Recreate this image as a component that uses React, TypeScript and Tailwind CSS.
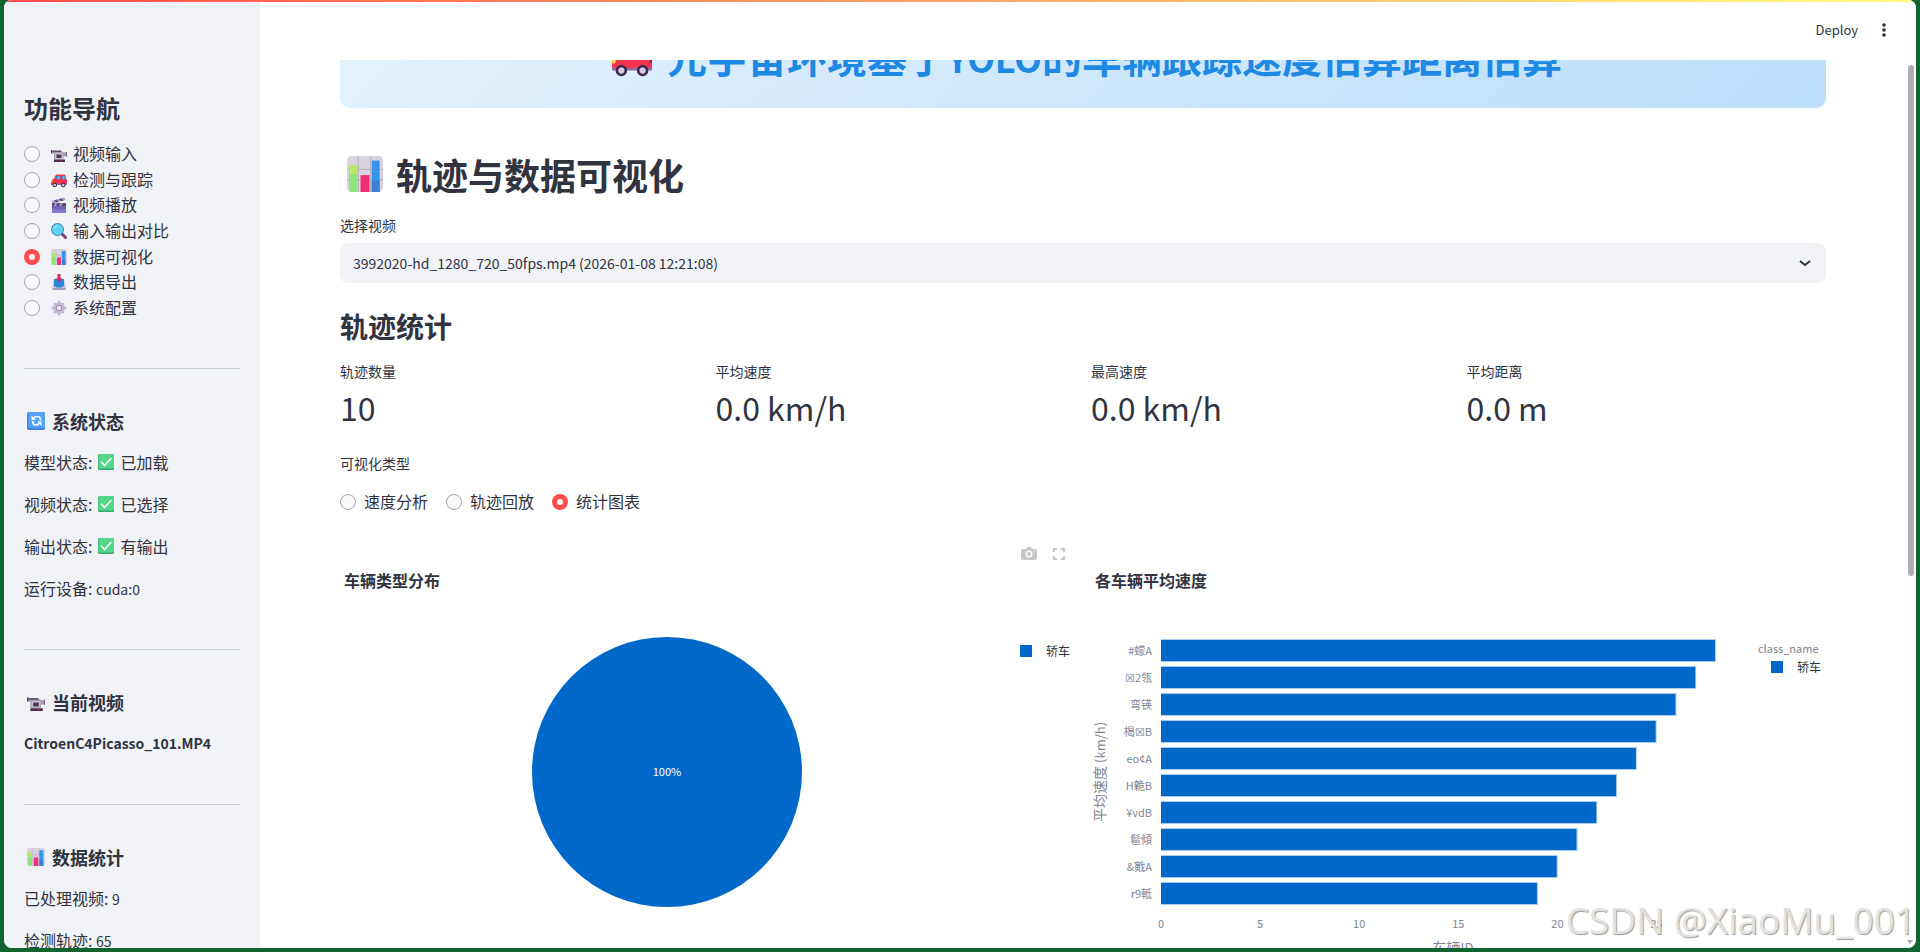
import { useState } from "react"
import type { ReactNode } from "react"

const font = "font-['Noto_Sans_CJK_SC','Noto_Sans',sans-serif]"

function ChartEmoji({ className }: { className: string }) {
    return (
        <svg viewBox="0 0 32 32" className={className} aria-hidden="true">
            <rect width="32" height="32" rx="4" fill="#d8d3e0" />
            <path d="M0 12h32M0 21h32M10 0v32M21 0v32" stroke="#b9b0c8" strokeWidth="1" />
            <path d="M2 8h7v24H4q-2 0-2-2z" fill="#8fe27c" />
            <path d="M2 8h7v8H2z" fill="#b8e866" />
            <rect x="12" y="17" width="8" height="15" fill="#ef2f73" />
            <path d="M22 4h7v28h-7z" fill="#3795e8" />
            <path d="M22 22h7v10h-7z" fill="#3f7fd6" />
        </svg>
    )
}

function CarEmoji({ className }: { className: string }) {
    return (
        <svg viewBox="0 0 32 32" className={className} aria-hidden="true">
            <path d="M9 7q1-2 3-2h14q2 0 3 2l2 8H5z" fill="#e8304c" />
            <path d="M11 8h7v8H7zM20 8h7l2 8h-9z" fill="#3fc1ea" />
            <path d="M11 8h3l-3 8H7zM20 8h3v8h-3z" fill="#2a86c8" />
            <path d="M2 16q1-2 4-2h23q3 1 3 4v6q0 1-1 1H1q-1 0-1-2v-4z" fill="#f4354f" />
            <path d="M0 24h32v1q0 1-1 1H1q-1 0-1-1z" fill="#8b6d9c" />
            <ellipse cx="1.500" cy="18" rx="1.500" ry="2.500" fill="#ffe03a" />
            <path d="M30 17h2v3h-2z" fill="#a3145a" />
            <circle cx="7.500" cy="26" r="4.600" fill="#3e2b4f" />
            <circle cx="24.500" cy="26" r="4.600" fill="#3e2b4f" />
            <circle cx="7.500" cy="26" r="2.500" fill="#d9cbe8" />
            <circle cx="24.500" cy="26" r="2.500" fill="#d9cbe8" />
        </svg>
    )
}

function CameraEmoji({ className }: { className: string }) {
    return (
        <svg viewBox="0 0 32 32" className={className} aria-hidden="true">
            <path d="M0 8h3v7H0z" fill="#4a3a56" />
            <path d="M3 10h16q5 0 6 3l7-1v8l-7 1v6H6V15H3z" fill="#a79db3" />
            <path d="M3 9h17v3H3z" fill="#5c4b69" />
            <path d="M30 12h2v9h-2z" fill="#7c6c8b" />
            <rect x="8" y="14" width="16" height="12" rx="1" fill="#c8c1d1" />
            <rect x="11" y="17" width="10" height="7" fill="#4b3a5d" />
            <path d="M6 27h22v4q0 1-1 1H7q-1 0-1-1z" fill="#4a2f4d" />
            <rect x="19" y="28" width="3" height="2" fill="#c22f55" />
        </svg>
    )
}

function ClapperEmoji({ className }: { className: string }) {
    return (
        <svg viewBox="0 0 32 32" className={className} aria-hidden="true">
            <path d="M1 8 26 1l3 5L3 13z" fill="#a597c6" />
            <path d="m6 7 5 4 4-1-4-5zM16 4l5 4 4-1-5-4z" fill="#5c4875" />
            <path d="M2 12h28v20H2z" fill="#7465b4" />
            <path d="M2 12h28v6H2z" fill="#57467a" />
            <path d="m8 12-3 6h5l3-6zM19 12l-3 6h5l3-6z" fill="#a597c6" />
            <path d="M2 25h28v7H2z" fill="#8579d0" />
        </svg>
    )
}

function SearchEmoji({ className }: { className: string }) {
    return (
        <svg viewBox="0 0 32 32" className={className} aria-hidden="true">
            <path d="m20 20 9 9" stroke="#7a3f7d" strokeWidth="6" strokeLinecap="round" />
            <circle cx="13" cy="13" r="13" fill="#3d86bd" />
            <circle cx="13" cy="13" r="11" fill="#5fd2ee" />
            <path d="M6 11q2-5 7-5" stroke="#b5f0fb" strokeWidth="2" fill="none" />
        </svg>
    )
}

function ExportEmoji({ className }: { className: string }) {
    return (
        <svg viewBox="0 0 32 32" className={className} aria-hidden="true">
            <path d="M6 9h20l3 16v5q0 2-2 2H5q-2 0-2-2v-5z" fill="#cfc4dc" />
            <path d="M6 10h20v14l-5 3H11l-5-3z" fill="#2e86d8" />
            <path d="M3 28h26v2q0 2-2 2H5q-2 0-2-2z" fill="#a99bbd" />
            <path d="M13 0h6v9h4l-7 7-7-7h4z" fill="#d8295c" />
        </svg>
    )
}

function GearEmoji({ className }: { className: string }) {
    return (
        <svg viewBox="0 0 32 32" className={className} aria-hidden="true">
            <g stroke="#c3b7d5" strokeWidth="6" strokeLinecap="round">
                <path d="M16 4v24M4 16h24M8 8l16 16M24 8 8 24" />
            </g>
            <circle cx="16" cy="16" r="11" fill="#c8bbd9" />
            <circle cx="16" cy="16" r="6.500" fill="#9d8fae" />
            <circle cx="16" cy="16" r="4.500" fill="#e9e6ef" />
        </svg>
    )
}

function RefreshEmoji({ className }: { className: string }) {
    return (
        <svg viewBox="0 0 32 32" className={className} aria-hidden="true">
            <rect width="32" height="32" rx="3" fill="#3f7fe0" />
            <rect x="2" width="30" height="29" rx="3" fill="#52a0f7" />
            <g fill="none" stroke="#fff" strokeWidth="3">
                <path d="M11 12q2-4 7-4 6 0 6 7" />
                <path d="M23 19q-2 4-7 4-6 0-6-7" />
            </g>
            <path d="M8 6v8h8zM26 25v-8h-8z" fill="#fff" />
        </svg>
    )
}

function CheckEmoji({ className }: { className: string }) {
    return (
        <svg viewBox="0 0 32 32" className={className} aria-hidden="true">
            <rect width="32" height="32" rx="3" fill="#35a869" />
            <rect x="1" width="31" height="29" rx="3" fill="#56d68b" />
            <path d="m7 16 6 7L26 9" fill="none" stroke="#fff" strokeWidth="3" strokeLinecap="round" />
        </svg>
    )
}

const navItems = [
    { label: "视频输入", Icon: CameraEmoji },
    { label: "检测与跟踪", Icon: CarEmoji },
    { label: "视频播放", Icon: ClapperEmoji },
    { label: "输入输出对比", Icon: SearchEmoji },
    { label: "数据可视化", Icon: ChartEmoji },
    { label: "数据导出", Icon: ExportEmoji },
    { label: "系统配置", Icon: GearEmoji },
]

const statusItems = [
    { label: "模型状态:", value: "已加载" },
    { label: "视频状态:", value: "已选择" },
    { label: "输出状态:", value: "有输出" },
]

const metrics = [
    { label: "轨迹数量", value: "10" },
    { label: "平均速度", value: "0.0 km/h" },
    { label: "最高速度", value: "0.0 km/h" },
    { label: "平均距离", value: "0.0 m" },
]

const chartTypes = ["速度分析", "轨迹回放", "统计图表"]

const bars = [
    { id: "#蠓A", value: 28 },
    { id: "☒2瓴", value: 27 },
    { id: "弯锳", value: 26 },
    { id: "楬☒B", value: 25 },
    { id: "eo¢A", value: 24 },
    { id: "H臲B", value: 23 },
    { id: "¥vdB", value: 22 },
    { id: "髱傾", value: 21 },
    { id: "&戭A", value: 20 },
    { id: "r9軧", value: 19 },
]

const ticks = [0, 5, 10, 15, 20, 25]

const radioClass =
    "size-4 shrink-0 appearance-none rounded-full border border-[#a3a5ad] bg-[#fafafc] checked:border-5 checked:border-[#ff4b4b]"

function SideHeading({ icon, children }: { icon: ReactNode; children: ReactNode }) {
    return (
        <h3 className="flex items-center gap-[7px] pl-[3px] text-lg leading-6 font-bold">
            {icon}
            {children}
        </h3>
    )
}

function Sidebar() {
    const [page, setPage] = useState("数据可视化")

    return (
        <aside className="w-64 shrink-0 overflow-hidden bg-[#f0f2f6] px-5 pt-[93px]">
            <h2 className="text-2xl leading-[30px] font-bold">功能导航</h2>
            <div className="mt-[19px] flex h-[178px] flex-col justify-between">
                {navItems.map(({ label, Icon }) => (
                    <label key={label} className="flex h-6 items-center">
                        <input
                            type="radio"
                            name="page"
                            className={radioClass}
                            checked={page === label}
                            onChange={() => setPage(label)}
                        />
                        <Icon className="mr-[6px] ml-[11px] size-4" />
                        <span className="pb-0.5">{label}</span>
                    </label>
                ))}
            </div>
            <hr className="mt-12 mb-10 border-[#cacdd2]" />
            <SideHeading icon={<RefreshEmoji className="size-[18px]" />}>系统状态</SideHeading>
            <div className="mt-4 flex flex-col gap-4 leading-[26px]">
                {statusItems.map((item) => (
                    <p key={item.label} className="flex items-center">
                        {item.label}
                        <CheckEmoji className="mr-[6px] ml-[6px] size-4" />
                        {item.value}
                    </p>
                ))}
                <p>运行设备: <span className="text-sm">cuda:0</span></p>
            </div>
            <hr className="mt-12 mb-10 border-[#cacdd2]" />
            <SideHeading icon={<CameraEmoji className="size-[18px]" />}>当前视频</SideHeading>
            <p className="mt-4 text-sm leading-[26px] font-semibold">CitroenC4Picasso_101.MP4</p>
            <hr className="mt-12 mb-10 border-[#cacdd2]" />
            <SideHeading icon={<ChartEmoji className="size-[18px]" />}>数据统计</SideHeading>
            <div className="mt-4 flex flex-col gap-4 leading-[26px]">
                <p>已处理视频: <span className="text-sm">9</span></p>
                <p>检测轨迹: <span className="text-sm">65</span></p>
            </div>
        </aside>
    )
}

function PieChart() {
    return (
        <div className="relative">
            <svg viewBox="0 0 735 450" className={`w-full ${font}`} role="img" aria-label="车辆类型分布">
                <text x="4" y="47" fontSize="16" fontWeight="700" fill="#31333f">车辆类型分布</text>
                <circle cx="327" cy="232" r="135" fill="#0068c9" />
                <text x="327" y="236" fontSize="11" textAnchor="middle" fill="#fff">100%</text>
                <rect x="680" y="105" width="12" height="12" fill="#0068c9" />
                <text x="706" y="116" fontSize="12" fill="#31333f">轿车</text>
            </svg>
            <div className="absolute top-[6px] right-[7px] flex gap-3 text-[#c6c6c9]">
                <button type="button" aria-label="下载图片" className="size-[18px]">
                    <svg viewBox="0 0 18 18" fill="currentColor">
                        <path d="M5 3h1l1-2h4l1 2h3q2 0 2 2v7q0 2-2 2H3q-2 0-2-2V5q0-2 2-2z" />
                        <circle cx="9" cy="8" r="3.500" fill="#fff" />
                        <circle cx="9" cy="8" r="2" />
                        <circle cx="14.500" cy="5" r="0.700" fill="#fff" />
                    </svg>
                </button>
                <button type="button" aria-label="全屏" className="size-[18px]">
                    <svg viewBox="0 0 18 18" fill="none" stroke="currentColor" strokeWidth="2">
                        <path d="M4 6V3h3M11 3h3v3M14 10v3h-3M7 13H4v-3" />
                    </svg>
                </button>
            </div>
        </div>
    )
}

function BarChart() {
    return (
        <svg viewBox="0 0 735 450" className={`w-full ${font}`} role="img" aria-label="各车辆平均速度">
            <text x="4" y="47" fontSize="16" fontWeight="700" fill="#31333f">各车辆平均速度</text>
            <text transform="translate(14 232) rotate(-90)" fontSize="14" textAnchor="middle" fill="#808495">
                平均速度 <tspan fontSize="13">(km/h)</tspan>
            </text>
            {bars.map((bar, i) => (
                <g key={bar.id}>
                    <rect
                        x="70"
                        y={99 + i * 27}
                        width={(bar.value * 554) / 28 + 1}
                        height="23"
                        fill="#a9cdee"
                    />
                    <rect x="70" y={100 + i * 27} width={(bar.value * 554) / 28} height="21" fill="#0068c9" />
                    <text x="61" y={115 + i * 27} fontSize="11" textAnchor="end" fill="#808495">{bar.id}</text>
                </g>
            ))}
            {ticks.map((tick) => (
                <text key={tick} x={70 + (tick * 555) / 28} y="388" fontSize="11" textAnchor="middle" fill="#808495">
                    {tick}
                </text>
            ))}
            <text x="362" y="413" fontSize="14" textAnchor="middle" fill="#808495">
                车辆<tspan fontSize="13">ID</tspan>
            </text>
            <text x="667" y="113" fontSize="11" fill="#808495">class_name</text>
            <rect x="680" y="121" width="12" height="12" fill="#0068c9" />
            <text x="706" y="132" fontSize="12" fill="#31333f">轿车</text>
        </svg>
    )
}

function Content() {
    const [chartType, setChartType] = useState("统计图表")

    return (
        <div className="min-h-0 flex-1 overflow-hidden pr-[90px] pl-20">
            <div className="-mt-[52px] flex h-[100px] items-center justify-center gap-[15px] rounded-[10px] bg-[linear-gradient(135deg,#e3f2fd,#bbdefb)] pl-2">
                <CarEmoji className="size-10" />
                <h1 className="pb-1 text-[40px] leading-none font-bold text-[#1e88e5]">
                    元宇宙环境基于<span className="text-4xl leading-none">YOLO</span>的车辆跟踪速度估算距离估算
                </h1>
            </div>
            <h2 className="mt-11 flex items-center gap-[13px] pl-[7px] text-4xl leading-[44px] font-bold">
                <ChartEmoji className="size-9" />
                轨迹与数据可视化
            </h2>
            <label htmlFor="video" className="mt-[19px] block text-sm">选择视频</label>
            <div className="relative mt-2">
                <select
                    id="video"
                    className="block h-10 w-full appearance-none rounded-lg bg-[#f0f2f6] px-[13px] text-sm"
                >
                    <option>3992020-hd_1280_720_50fps.mp4 (2026-01-08 12:21:08)</option>
                </select>
                <svg
                    viewBox="0 0 12 12"
                    className="pointer-events-none absolute top-[14px] right-[15px] size-3"
                    fill="none"
                    stroke="#31333f"
                    strokeWidth="2"
                >
                    <path d="m1 4 5 4 5-4" />
                </svg>
            </div>
            <h3 className="mt-[26px] text-[28px] leading-[34px] font-bold">轨迹统计</h3>
            <div className="mt-[18px] grid grid-cols-4 gap-4">
                {metrics.map((metric) => (
                    <div key={metric.label}>
                        <p className="text-sm">{metric.label}</p>
                        <p className="mt-1 text-[32px] leading-[44px]">{metric.value}</p>
                    </div>
                ))}
            </div>
            <fieldset className="mt-6">
                <legend className="text-sm">可视化类型</legend>
                <div className="mt-[17px] flex gap-[18px]">
                    {chartTypes.map((type) => (
                        <label key={type} className="flex h-6 items-center gap-2">
                            <input
                                type="radio"
                                name="chartType"
                                className={radioClass}
                                checked={chartType === type}
                                onChange={() => setChartType(type)}
                            />
                            <span className="pb-0.5">{type}</span>
                        </label>
                    ))}
                </div>
            </fieldset>
            <div className="mt-[26px] grid grid-cols-2 gap-4">
                <PieChart />
                <BarChart />
            </div>
        </div>
    )
}

export default function App() {
    return (
        <div className={`h-screen bg-[#11642f] px-1 pb-1 text-[#31333f] ${font}`}>
            <div className="relative flex h-full overflow-hidden rounded-lg bg-white">
                <Sidebar />
                <main className="flex min-w-0 flex-1 flex-col">
                    <header className="z-10 flex h-[60px] shrink-0 items-center justify-end gap-[21px] bg-white pr-[27px]">
                        <button type="button" className="text-[13px]">Deploy</button>
                        <button type="button" aria-label="菜单">
                            <svg viewBox="0 0 10 16" className="h-4 w-[10px]" fill="#31333f">
                                <circle cx="5" cy="3" r="1.800" />
                                <circle cx="5" cy="8" r="1.800" />
                                <circle cx="5" cy="13" r="1.800" />
                            </svg>
                        </button>
                    </header>
                    <Content />
                </main>
                <div className="absolute inset-x-0 top-0 z-20 h-0.5 bg-[linear-gradient(90deg,#ff4b4b,#fffd80)]" />
                <div className="absolute top-[65px] right-0.5 h-[511px] w-1.5 rounded-full bg-[#afafb2]" />
                <div className="absolute right-[3px] bottom-1 border-x-3 border-t-4 border-x-transparent border-t-[#a8a8ac]" />
                <p className="absolute right-0 bottom-2 font-['Open_Sans','Noto_Sans',sans-serif] text-[37px] leading-10 font-normal whitespace-nowrap text-[#e2e2e2] [text-shadow:1px_1px_1px_#999]">
                    CSDN @XiaoMu_001
                </p>
            </div>
        </div>
    )
}
